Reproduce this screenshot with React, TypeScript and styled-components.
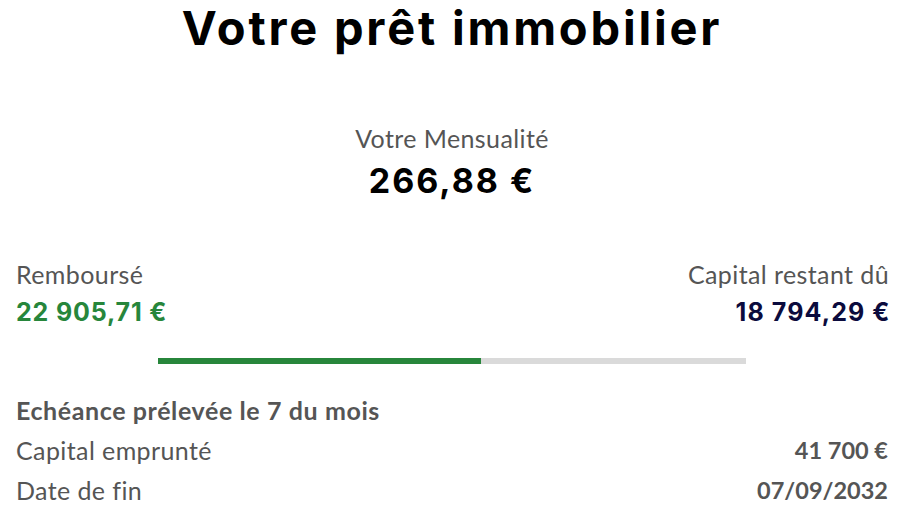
import React from "react";
import styled, { createGlobalStyle } from "styled-components";

const GlobalStyle = createGlobalStyle`
  html, body { margin: 0; padding: 0; background: #ffffff; }
  body { font-family: "Lato", "Open Sans", sans-serif; }
`;

const Page = styled.main`
  display: flex;
  flex-direction: column;
  padding: 0 12px 0 16px;
  width: 900px;
  box-sizing: border-box;
`;

const Title = styled.h1`
  margin: 0;
  height: 60px;
  line-height: 56px;
  text-align: center;
  font-family: "Inter", "Liberation Sans", sans-serif;
  font-weight: 700;
  font-size: 47px;
  letter-spacing: 2.8px;
  color: #000000;
`;

const Summary = styled.section`
  display: flex;
  flex-direction: column;
  align-items: center;
  margin-top: 63px;
  gap: 6px;
`;

const Label = styled.div<{ $align?: "left" | "right" | "center" }>`
  font-family: "Lato", "Open Sans", sans-serif;
  font-size: 25px;
  letter-spacing: 0.4px;
  line-height: 30px;
  color: #555555;
  text-align: ${(p) => p.$align ?? "left"};
  margin-right: ${(p) => (p.$align === "right" ? "-1px" : "0")};
`;

const Amount = styled.div<{ $color: string; $size: number; $spacing: number; $end?: boolean }>`
  font-family: "Inter", "Liberation Sans", sans-serif;
  font-weight: 700;
  font-size: ${(p) => p.$size}px;
  letter-spacing: ${(p) => p.$spacing}px;
  line-height: ${(p) => p.$size + 10}px;
  color: ${(p) => p.$color};
  margin-right: ${(p) => (p.$end ? `-${p.$spacing + 1.5}px` : "0")};
`;

const Split = styled.section`
  display: flex;
  justify-content: space-between;
  margin-top: 56px;
`;

const Side = styled.div<{ $align: "flex-start" | "flex-end" }>`
  display: flex;
  flex-direction: column;
  align-items: ${(p) => p.$align};
  gap: 6px;
`;

const Track = styled.div`
  align-self: center;
  width: 588px;
  height: 6px;
  background: #dadada;
  margin-top: 28px;
`;

const Fill = styled.div`
  height: 100%;
  background: #27863b;
`;

const Details = styled.section`
  display: flex;
  flex-direction: column;
  margin-top: 26px;
`;

const Row = styled.div`
  display: flex;
  justify-content: space-between;
  align-items: center;
  height: 40px;
  font-family: "Lato", "Open Sans", sans-serif;
  font-size: 25px;
  letter-spacing: 0.4px;
  color: #555555;
`;

const Heading = styled.span`
  font-weight: 700;
  letter-spacing: 0.6px;
`;

const Value = styled.span`
  font-weight: 700;
  font-size: 23.5px;
  letter-spacing: 0;
`;

export default function App() {
  const paid = 22905.71;
  const total = 41700;
  return (
    <>
      <GlobalStyle />
      <Page>
        <Title>Votre prêt immobilier</Title>
        <Summary>
          <Label $align="center">Votre Mensualité</Label>
          <Amount $color="#000000" $size={34} $spacing={2}>266,88 €</Amount>
        </Summary>
        <Split>
          <Side $align="flex-start">
            <Label>Remboursé</Label>
            <Amount $color="#27863b" $size={25} $spacing={0.85}>22 905,71 €</Amount>
          </Side>
          <Side $align="flex-end">
            <Label $align="right">Capital restant dû</Label>
            <Amount $color="#0b0b3d" $size={25} $spacing={1.1} $end>18 794,29 €</Amount>
          </Side>
        </Split>
        <Track>
          <Fill style={{ width: `${(paid / total) * 100}%` }} />
        </Track>
        <Details>
          <Row>
            <Heading>Echéance prélevée le 7 du mois</Heading>
          </Row>
          <Row>
            <span>Capital emprunté</span>
            <Value>41 700 €</Value>
          </Row>
          <Row>
            <span>Date de fin</span>
            <Value>07/09/2032</Value>
          </Row>
        </Details>
      </Page>
    </>
  );
}
